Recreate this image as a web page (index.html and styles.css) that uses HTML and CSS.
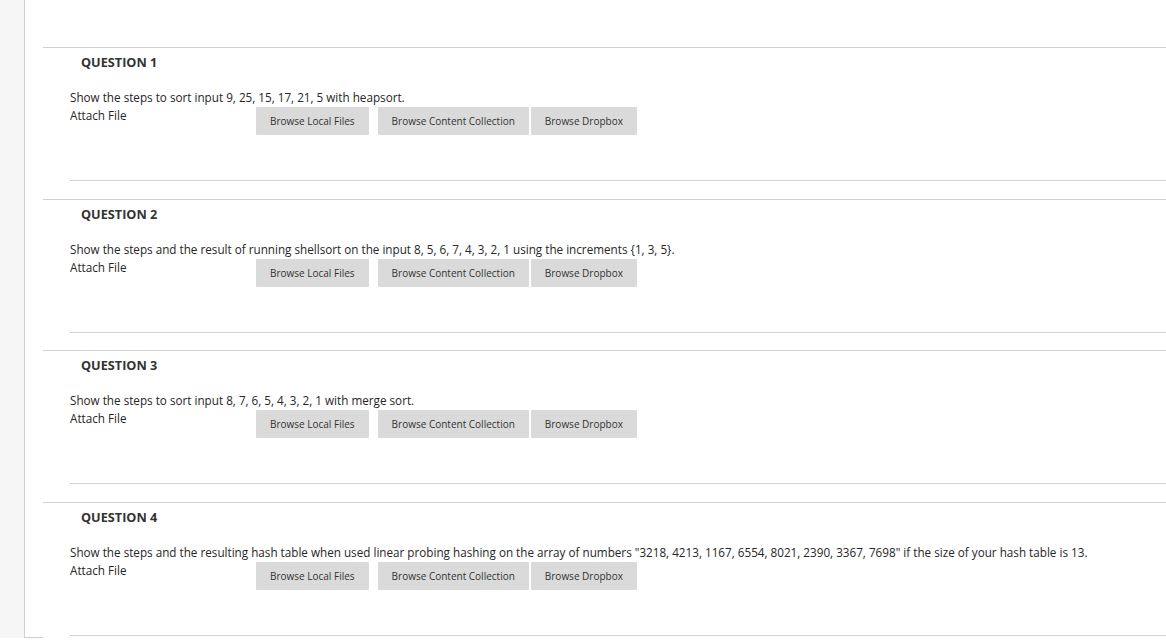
FILE: index.html
```html
<!DOCTYPE html>
<html>
<head>
    <meta charset="UTF-8">
    <title>Take Test</title>
    <link rel="stylesheet" href="styles.css">
</head>
<body>
<div class="side"></div>
<div class="main">
    <ol class="questions">
        <li class="question">
            <h3>QUESTION 1</h3>
            <div class="question_body">
                <p class="question_text">Show the steps to sort input 9, 25, 15, 17, 21, 5 with heapsort.</p>
                <div class="attach">
                    <span class="attach_label">Attach File</span>
                    <button class="browse local">Browse Local Files</button>
                    <button class="browse collection">Browse Content Collection</button>
                    <button class="browse">Browse Dropbox</button>
                </div>
            </div>
        </li>
        <li class="question">
            <h3>QUESTION 2</h3>
            <div class="question_body">
                <p class="question_text">Show the steps and the result of running shellsort on the input 8, 5, 6, 7, 4, 3, 2, 1 using the increments {1, 3, 5}.</p>
                <div class="attach">
                    <span class="attach_label">Attach File</span>
                    <button class="browse local">Browse Local Files</button>
                    <button class="browse collection">Browse Content Collection</button>
                    <button class="browse">Browse Dropbox</button>
                </div>
            </div>
        </li>
        <li class="question">
            <h3>QUESTION 3</h3>
            <div class="question_body">
                <p class="question_text">Show the steps to sort input 8, 7, 6, 5, 4, 3, 2, 1 with merge sort.</p>
                <div class="attach">
                    <span class="attach_label">Attach File</span>
                    <button class="browse local">Browse Local Files</button>
                    <button class="browse collection">Browse Content Collection</button>
                    <button class="browse">Browse Dropbox</button>
                </div>
            </div>
        </li>
        <li class="question">
            <h3>QUESTION 4</h3>
            <div class="question_body">
                <p class="question_text">Show the steps and the resulting hash table when used linear probing hashing on the array of numbers "3218, 4213, 1167, 6554, 8021, 2390, 3367, 7698" if the size of your hash table is 13.</p>
                <div class="attach">
                    <span class="attach_label">Attach File</span>
                    <button class="browse local">Browse Local Files</button>
                    <button class="browse collection">Browse Content Collection</button>
                    <button class="browse">Browse Dropbox</button>
                </div>
            </div>
        </li>
    </ol>
</div>
</body>
</html>
```

FILE: styles.css
```css
html, body {
    margin: 0;
    padding: 0;
}
body {
    display: flex;
    font-family: 'Open Sans', 'Liberation Sans', sans-serif;
    font-size: 11.7px;
    color: #262626;
    background: #fff;
    overflow: hidden;
}
.side {
    width: 24px;
    flex: none;
    background: #f6f6f6;
}
.main {
    flex: 1;
    padding-top: 47px;
    border-left: 1px solid #cfcfcf;
    border-bottom: 1px solid #cfcfcf;
}
.questions {
    list-style: none;
    margin: 0 0 -16px 18px;
    padding: 0;
    background: #fff;
}
.question {
    border-top: 1px solid #d2d2d2;
    padding-bottom: 17.5px;
}
.question h3 {
    margin: 0;
    padding: 5px 0 0 38px;
    font-size: 12.7px;
    line-height: 18px;
    font-weight: bold;
    color: #333;
}
.question_body {
    margin-left: 27px;
    padding-bottom: 45px;
    border-bottom: 1px solid #d2d2d2;
}
.question_text {
    margin: 17px 0 0;
    line-height: 18px;
}
.attach {
    display: flex;
    align-items: flex-start;
}
.attach_label {
    width: 186px;
    line-height: 18px;
}
.browse {
    margin-top: 1px;
    height: 28px;
    padding: 0 14px;
    border: none;
    border-radius: 1px;
    background: #dadada;
    font-family: 'Open Sans', 'Liberation Sans', sans-serif;
    font-size: 10px;
    color: #333;
}
.browse.local {
    margin-right: 9px;
}
.browse.collection {
    margin-right: 2px;
}
```
